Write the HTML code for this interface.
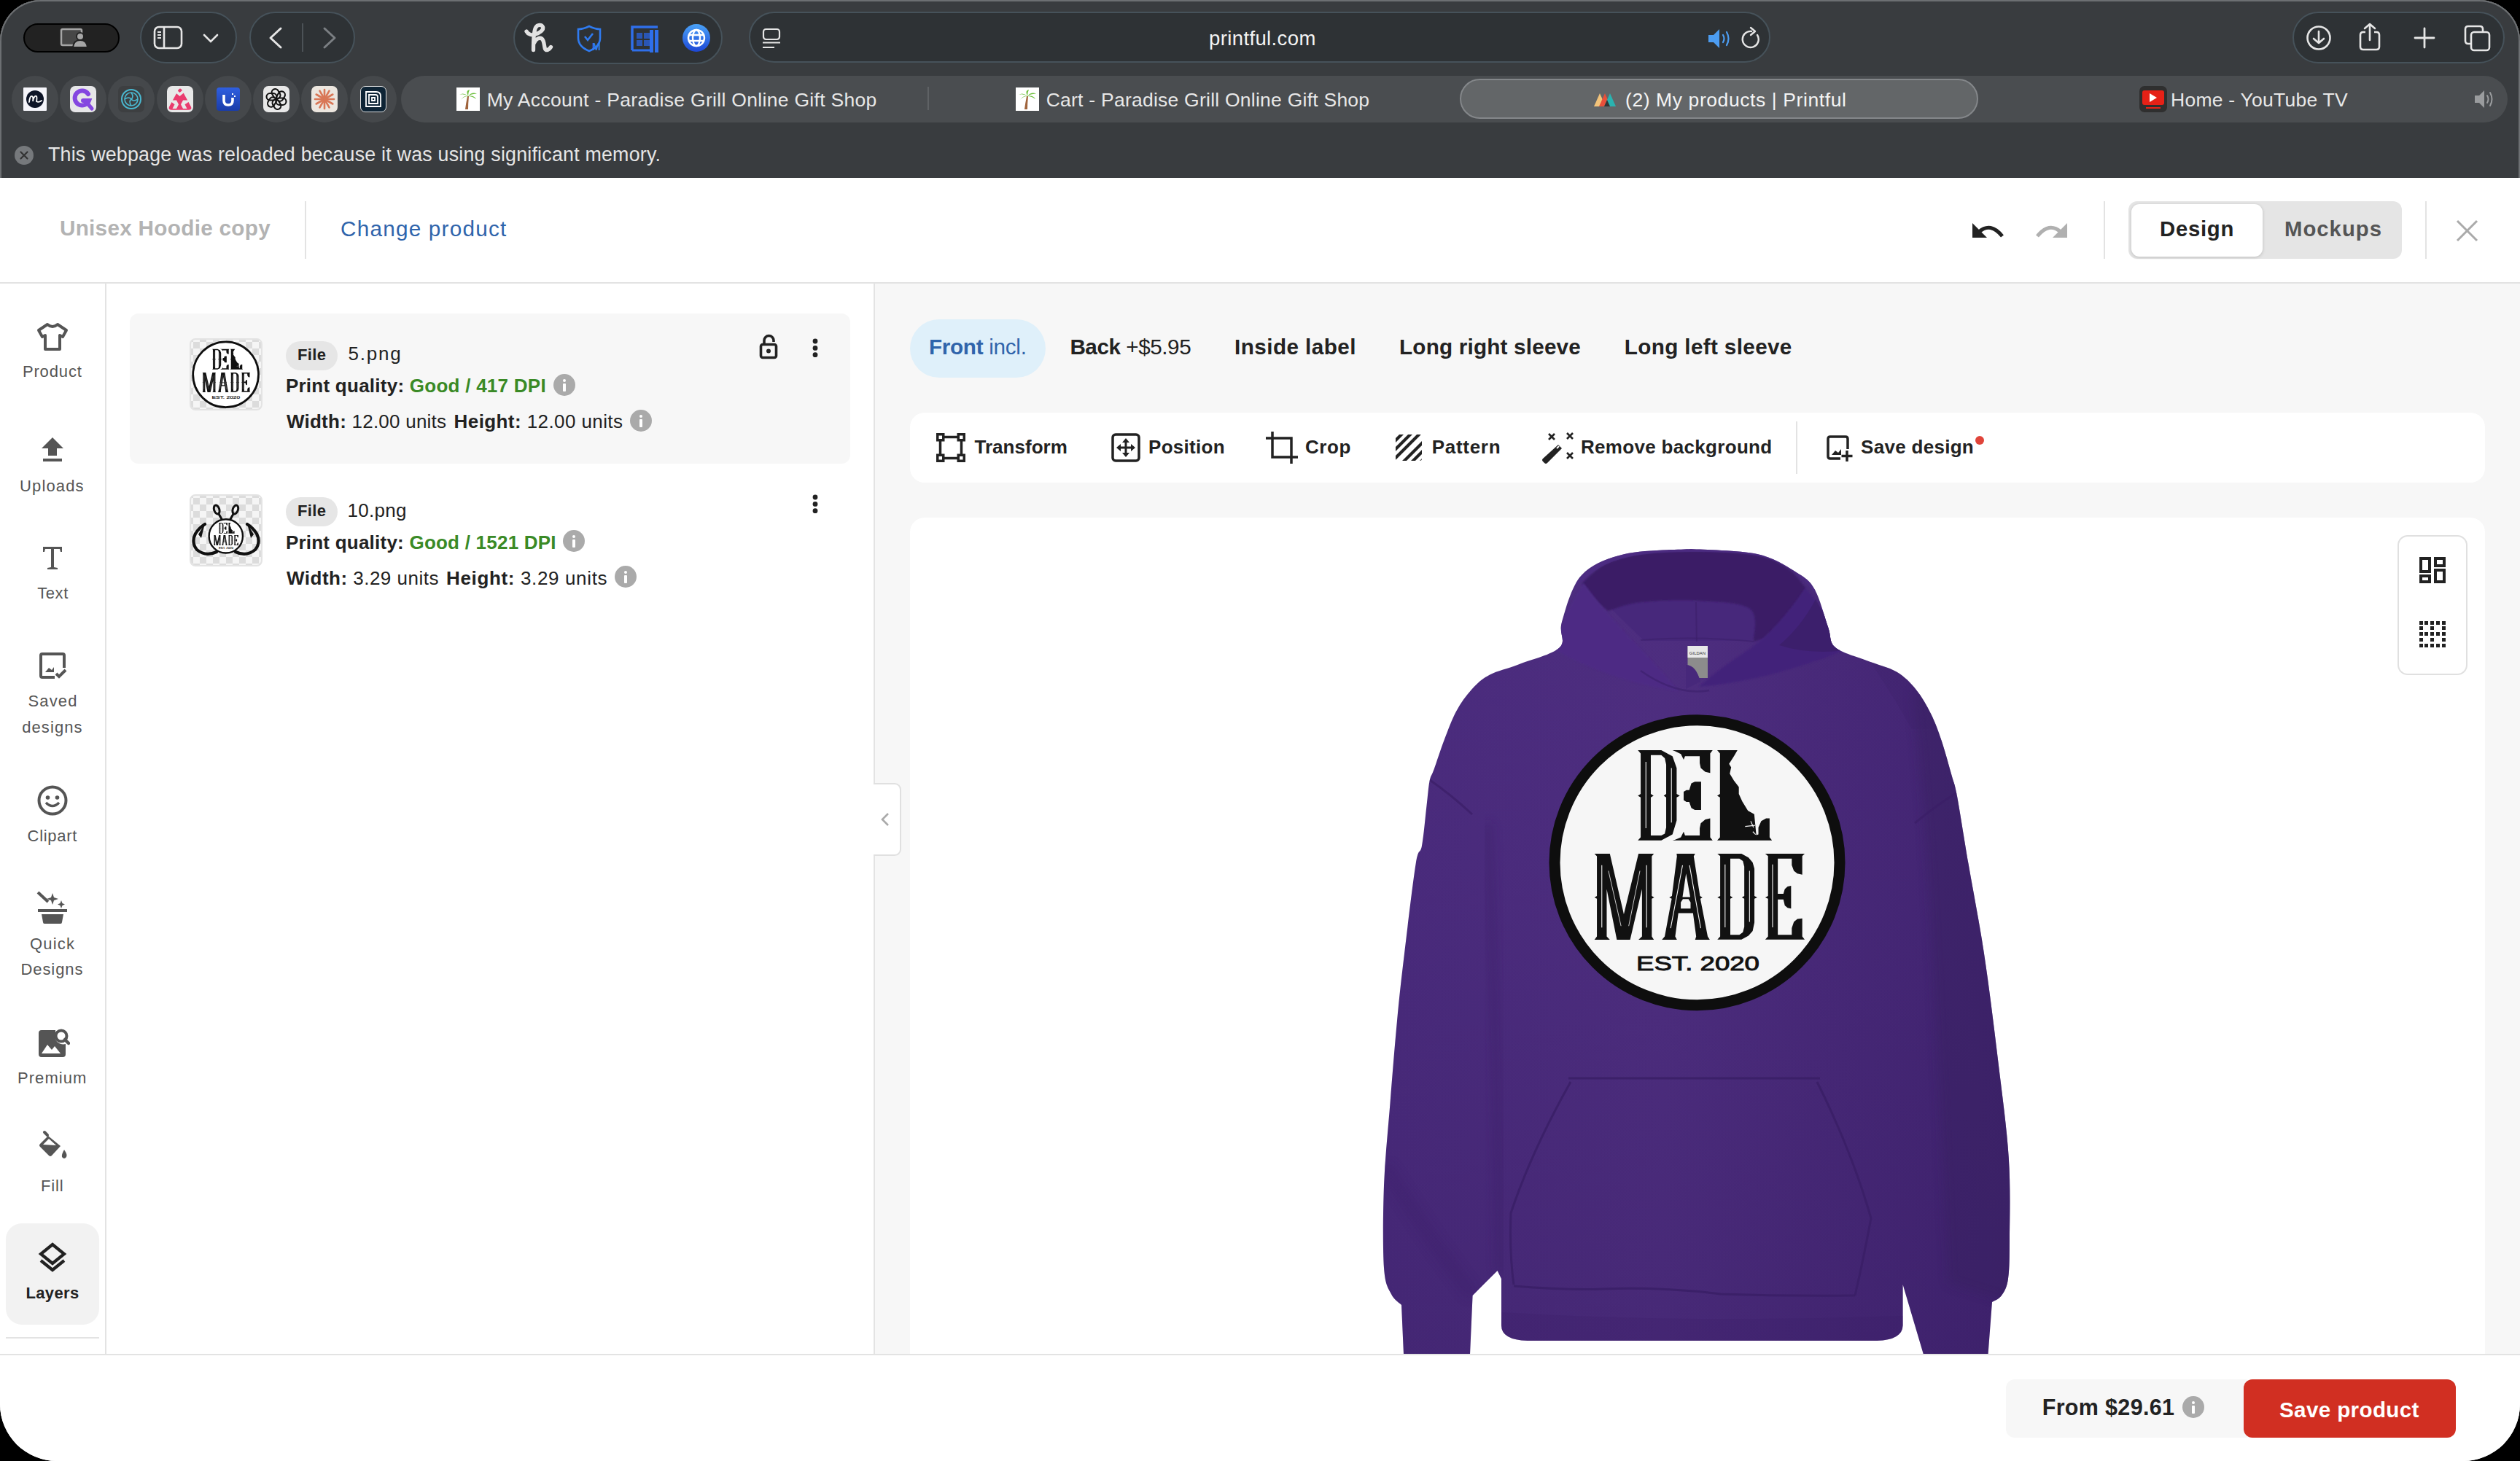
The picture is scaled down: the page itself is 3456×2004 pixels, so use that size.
<!DOCTYPE html>
<html><head><meta charset="utf-8">
<style>
*{box-sizing:border-box;margin:0;padding:0}
html,body{width:3456px;height:2004px;overflow:hidden;background:#000}
body{font-family:"Liberation Sans",sans-serif;position:relative}
.a{position:absolute}
.win{position:absolute;left:0;top:0;width:3456px;height:2004px;border-radius:56px 56px 78px 78px;overflow:hidden;background:#fff}
.chrome{position:absolute;left:0;top:0;width:3456px;height:244px;background:#393c3f}
.edge{position:absolute;left:0;top:0;width:3456px;height:244px;border-radius:56px 56px 0 0;border:2px solid #6c6f72;border-bottom:none;pointer-events:none}
.grp{position:absolute;top:16px;height:71px;border-radius:36px;background:#2e3235;border:2px solid #46525a}
.fav{position:absolute;top:104px;width:64px;height:64px;border-radius:50%;background:#45484b}
.fico{position:absolute;left:14px;top:14px;width:36px;height:36px;border-radius:7px;overflow:hidden}
.ttl{position:absolute;top:104px;height:64px;line-height:64px;font-size:25.5px;color:#e6e6e6;white-space:nowrap}
.t{position:absolute;white-space:nowrap;line-height:1}
.dk{color:#222}
.b{font-weight:bold}
.side{position:absolute;left:0;width:144px;text-align:center;font-size:24px;color:#555;line-height:36px}
.info{position:absolute;width:30px;height:30px;border-radius:50%;background:#aaa}
.info:before{content:"";position:absolute;left:13px;top:7px;width:4px;height:4px;border-radius:2px;background:#fff}
.info:after{content:"";position:absolute;left:13px;top:13px;width:4px;height:11px;background:#fff;border-radius:1px}
</style></head><body>
<div class="win">
<div class="chrome">
  <!-- screen share pill -->
  <div class="a" style="left:32px;top:32px;width:132px;height:40px;border-radius:20px;background:#222;border:2px solid #000"></div>
  <svg class="a" style="left:82px;top:38px" width="38" height="28" viewBox="0 0 38 28"><rect x="2" y="2" width="28" height="22" rx="2" fill="#474747" stroke="#a6a6a6" stroke-width="2.5"/><circle cx="28" cy="12" r="5" fill="#a6a6a6" stroke="#222" stroke-width="2"/><path d="M18 27 Q19 17 28 17 Q37 17 38 27 Z" fill="#a6a6a6" stroke="#222" stroke-width="2"/></svg>
  <!-- sidebar group -->
  <div class="grp" style="left:192px;width:133px"></div>
  <svg class="a" style="left:210px;top:35px" width="42" height="34" viewBox="0 0 42 34"><rect x="2" y="2" width="37" height="29" rx="6" fill="none" stroke="#e6e6e6" stroke-width="2.6"/><line x1="15" y1="2" x2="15" y2="31" stroke="#e6e6e6" stroke-width="2.6"/><path d="M6 9h5M6 13h5M6 17h5" stroke="#e6e6e6" stroke-width="1.8"/></svg>
  <svg class="a" style="left:278px;top:45px" width="22" height="16" viewBox="0 0 22 16"><path d="M2 3 L11 12 L20 3" fill="none" stroke="#e6e6e6" stroke-width="2.6" stroke-linecap="round"/></svg>
  <!-- back/forward group -->
  <div class="grp" style="left:342px;width:145px"></div>
  <svg class="a" style="left:366px;top:36px" width="24" height="32" viewBox="0 0 24 32"><path d="M19 3 L5 16 L19 29" fill="none" stroke="#e6e6e6" stroke-width="3" stroke-linecap="round" stroke-linejoin="round"/></svg>
  <div class="a" style="left:414px;top:32px;width:2px;height:39px;background:#4c5257"></div>
  <svg class="a" style="left:440px;top:36px" width="24" height="32" viewBox="0 0 24 32"><path d="M5 3 L19 16 L5 29" fill="none" stroke="#7b7f83" stroke-width="3" stroke-linecap="round" stroke-linejoin="round"/></svg>
  <!-- extensions group -->
  <div class="grp" style="left:704px;width:287px;height:72px"></div>
  <svg class="a" style="left:715px;top:28px" width="46" height="46" viewBox="0 0 46 46"><path d="M7,15 C9,19 14,20.5 18,19.5 C25,17.5 31,13 29.5,9 C28,5.5 22,5 19.5,10 C17,15 16.5,27 16.5,40.5 M17.5,31 C20,25 25,23 28,25 C31.5,27.5 31,35 32.5,39 C34,42 38,40.5 40.5,36.5" fill="none" stroke="#e2e2e2" stroke-width="5.3" stroke-linecap="round" stroke-linejoin="round"/></svg>
  <svg class="a" style="left:790px;top:34px" width="38" height="38" viewBox="0 0 38 38"><path d="M18 2 Q26 6 33 6 L33 18 Q33 30 18 36 Q3 30 3 18 L3 6 Q10 6 18 2Z" fill="none" stroke="#2f7bf0" stroke-width="2.6"/><path d="M12 16 L16 21 L23 12" fill="none" stroke="#2f7bf0" stroke-width="2.6"/><text x="22" y="35" font-size="14" font-weight="bold" fill="#2f7bf0" font-family="Liberation Sans">M</text></svg>
  <svg class="a" style="left:864px;top:34px" width="40" height="38" viewBox="0 0 40 38"><path d="M3 35 L3 3 L38 3" fill="none" stroke="#2f6fea" stroke-width="3.5"/><rect x="9" y="11" width="8" height="8" fill="#2a56b5"/><rect x="19" y="11" width="8" height="8" fill="#2a56b5"/><rect x="9" y="21" width="8" height="8" fill="#2a56b5"/><rect x="19" y="21" width="8" height="8" fill="#2a56b5"/><rect x="27" y="7" width="5" height="31" fill="#2f6fea"/><rect x="34" y="7" width="5" height="31" fill="#2f6fea"/><path d="M3 35 L27 35" stroke="#2f6fea" stroke-width="3"/></svg>
  <svg class="a" style="left:935px;top:32px" width="40" height="40" viewBox="0 0 40 40"><defs><linearGradient id="gg" x1="0" y1="0" x2="0" y2="1"><stop offset="0" stop-color="#4aa3f8"/><stop offset="1" stop-color="#1d47d6"/></linearGradient></defs><circle cx="20" cy="20" r="19" fill="url(#gg)"/><circle cx="20" cy="20" r="11" fill="none" stroke="#fff" stroke-width="2.4"/><ellipse cx="20" cy="20" rx="5" ry="11" fill="none" stroke="#fff" stroke-width="2.4"/><path d="M9 16h22M9 24h22" stroke="#fff" stroke-width="2.4"/></svg>
  <!-- URL bar -->
  <div class="grp" style="left:1027px;width:1401px;height:70px"></div>
  <svg class="a" style="left:1044px;top:38px" width="28" height="30" viewBox="0 0 28 30"><rect x="3" y="2" width="22" height="14" rx="3.5" fill="none" stroke="#e6e6e6" stroke-width="2.2"/><path d="M2 20.5h24M2 27h16" stroke="#e6e6e6" stroke-width="2.2"/></svg>
<div class="t" id="url" style="left:1658.0px;top:38.7px;font-size:27.50px;color:#f4f4f4;letter-spacing:0.382px;">printful.com</div>
  <svg class="a" style="left:2342px;top:38px" width="34" height="30" viewBox="0 0 34 30"><path d="M1 10 L8 10 L16 2 L16 28 L8 20 L1 20Z" fill="#4c9df2"/><path d="M21 10 Q24 15 21 20M26 6 Q31 15 26 24" fill="none" stroke="#4c9df2" stroke-width="2.2" stroke-linecap="round"/></svg>
  <svg class="a" style="left:2388px;top:36px" width="30" height="32" viewBox="0 0 30 32"><path d="M22 12 A11 11 0 1 1 14 7" fill="none" stroke="#e6e6e6" stroke-width="2.4" stroke-linecap="round"/><path d="M13 2 L19 7 L13 12" fill="none" stroke="#e6e6e6" stroke-width="2.4" stroke-linecap="round" stroke-linejoin="round"/></svg>
  <!-- right toolbar -->
  <div class="grp" style="left:3144px;width:291px"></div>
  <svg class="a" style="left:3162px;top:34px" width="36" height="36" viewBox="0 0 36 36"><circle cx="18" cy="18" r="15.5" fill="none" stroke="#e6e6e6" stroke-width="2.6"/><path d="M18 9 L18 25 M11 19 L18 25 L25 19" fill="none" stroke="#e6e6e6" stroke-width="2.6" stroke-linecap="round" stroke-linejoin="round"/></svg>
  <svg class="a" style="left:3234px;top:30px" width="32" height="40" viewBox="0 0 32 40"><path d="M10 14 L7 14 Q3 14 3 18 L3 34 Q3 38 7 38 L25 38 Q29 38 29 34 L29 18 Q29 14 25 14 L22 14" fill="none" stroke="#e6e6e6" stroke-width="2.6"/><path d="M16 3 L16 25 M9 9 L16 3 L23 9" fill="none" stroke="#e6e6e6" stroke-width="2.6" stroke-linecap="round" stroke-linejoin="round"/></svg>
  <svg class="a" style="left:3310px;top:37px" width="30" height="30" viewBox="0 0 30 30"><path d="M15 2V28M2 15H28" stroke="#e6e6e6" stroke-width="2.8" stroke-linecap="round"/></svg>
  <svg class="a" style="left:3379px;top:34px" width="38" height="38" viewBox="0 0 38 38"><path d="M11 26 L6 26 Q2 26 2 22 L2 6 Q2 2 6 2 L22 2 Q26 2 26 6 L26 10" fill="none" stroke="#e6e6e6" stroke-width="2.6"/><rect x="10" y="10" width="25" height="25" rx="4" fill="none" stroke="#e6e6e6" stroke-width="2.6"/></svg>

  <!-- favorites -->
  <div class="fav" style="left:15.6px"><div class="fico" style="left:16px;top:16px;width:32px;height:32px;border-radius:1px;background:#f5f5fa"><svg width="32" height="32" viewBox="0 0 32 32"><circle cx="16" cy="16" r="12" fill="#0d1426"/><path d="M8 20 Q9 11 12 12 Q14 13 13 19 Q15 10 18 12 Q19 14 18 19 Q21 21 25 18" fill="none" stroke="#fff" stroke-width="1.8" stroke-linecap="round"/></svg></div></div>
<div class="fav" style="left:81.9px"><div class="fico" style="background:#e6e6e8"><svg width="36" height="36" viewBox="0 0 36 36"><path d="M25 11 A10 10 0 1 0 26 20 L18 20" fill="none" stroke="#8447e0" stroke-width="6" stroke-linecap="round"/><path d="M24 24 L30 31" stroke="#8447e0" stroke-width="5" stroke-linecap="round"/></svg></div></div>
<div class="fav" style="left:148.2px"><div class="fico" style="background:#3d3f41"><svg width="36" height="36" viewBox="0 0 36 36"><circle cx="18" cy="18" r="13" fill="none" stroke="#4ab8d0" stroke-width="2"/><circle cx="18" cy="18" r="9" fill="none" stroke="#4ab8d0" stroke-width="1.6"/><path d="M18 9 Q22 15 18 18 Q14 21 18 27 M9 18 Q15 14 18 18 Q21 22 27 18" fill="none" stroke="#4ab8d0" stroke-width="1.6"/></svg></div></div>
<div class="fav" style="left:214.5px"><div class="fico" style="background:#e8e8e8"><svg width="36" height="36" viewBox="0 0 36 36"><path d="M18 3.5 Q19.5 3.5 20.5 5.5 L33 28.5 Q34.5 32.5 30 32.8 L6 32.8 Q1.5 32.5 3 28.5 L15.5 5.5 Q16.5 3.5 18 3.5Z" fill="#ea3b6e"/><path d="M11 6 L17.5 11.5 L24 6" fill="none" stroke="#e8e8e8" stroke-width="3.8"/><path d="M3 19.4 L13 19.4 L16 25.3 L13 31 L7.5 31 L10.5 25.3 Z M33 19.4 L22 19.4 L19 25.3 L22 31 L27.5 31 L24.5 25.3 Z" fill="#e8e8e8"/></svg></div></div>
<div class="fav" style="left:280.8px"><div class="fico" style="left:16px;top:16px;width:32px;height:32px;border-radius:4px;background:linear-gradient(#2f5fe0,#1a3ca8)"><svg width="32" height="32" viewBox="0 0 32 32"><path d="M10 10 L10 18 Q10 24 16 24 Q22 24 22 18 L22 14" fill="none" stroke="#fff" stroke-width="3.6"/><rect x="21" y="8" width="2" height="2" fill="#fff"/><rect x="24" y="11" width="2" height="2" fill="#fff"/></svg></div></div>
<div class="fav" style="left:347.1px"><div class="fico" style="background:#e8e8e8"><svg width="36" height="36" viewBox="0 0 36 36"><g fill="none" stroke="#111" stroke-width="2.1"><rect x="16.5" y="4.5" width="9.5" height="14" rx="4.75" transform="rotate(30 18 18)"/><rect x="16.5" y="4.5" width="9.5" height="14" rx="4.75" transform="rotate(90 18 18)"/><rect x="16.5" y="4.5" width="9.5" height="14" rx="4.75" transform="rotate(150 18 18)"/><rect x="16.5" y="4.5" width="9.5" height="14" rx="4.75" transform="rotate(210 18 18)"/><rect x="16.5" y="4.5" width="9.5" height="14" rx="4.75" transform="rotate(270 18 18)"/><rect x="16.5" y="4.5" width="9.5" height="14" rx="4.75" transform="rotate(330 18 18)"/></g></svg></div></div>
<div class="fav" style="left:413.4px"><div class="fico" style="background:#ece6df"><svg width="36" height="36" viewBox="0 0 36 36"><g stroke="#d97757" stroke-width="2.6" stroke-linecap="round"><line x1="18" y1="18" x2="31.0" y2="18.0"/><line x1="18" y1="18" x2="29.3" y2="24.5"/><line x1="18" y1="18" x2="24.5" y2="29.3"/><line x1="18" y1="18" x2="18.0" y2="31.0"/><line x1="18" y1="18" x2="11.5" y2="29.3"/><line x1="18" y1="18" x2="6.7" y2="24.5"/><line x1="18" y1="18" x2="5.0" y2="18.0"/><line x1="18" y1="18" x2="6.7" y2="11.5"/><line x1="18" y1="18" x2="11.5" y2="6.7"/><line x1="18" y1="18" x2="18.0" y2="5.0"/><line x1="18" y1="18" x2="24.5" y2="6.7"/><line x1="18" y1="18" x2="29.3" y2="11.5"/></g></svg></div></div>
<div class="fav" style="left:479.7px"><div class="fico" style="background:#0e2435;border:1.5px solid #ddd"><svg width="34" height="34" viewBox="0 0 34 34"><path d="M7 7 L21 7 Q27 7 27 13 L27 27 L7 27 Z M11 11 L20 11 Q23 11 23 14 L23 23 L11 23 Z M15 15 L19 15 L19 19 L15 19Z" fill="none" stroke="#fff" stroke-width="1.8"/></svg></div></div>
  <!-- tab bar -->
  <div class="a" style="left:550px;top:104px;width:2889px;height:64px;border-radius:32px;background:#4a4d50"></div>
  <div class="a" style="left:2002px;top:108px;width:711px;height:55px;border-radius:28px;background:#636668;border:2px solid #84878a"></div>
  <div class="a" style="left:1272px;top:119px;width:2px;height:32px;background:#5f6265"></div>
  <svg class="a" style="left:626px;top:120px" width="32" height="32" viewBox="0 0 32 32"><rect width="32" height="32" fill="#fff"/><path d="M15 12 Q13 22 12 30 L16 30 Q16 22 17 12Z" fill="#a0643c"/><path d="M16 12 Q10 6 4 10 Q10 8 16 12 Q12 4 18 3 Q16 7 16 12 Q22 5 28 9 Q22 8 16 12 Q24 10 27 16 Q22 12 16 12 Q10 12 6 17 Q10 11 16 12Z" fill="#6cbf3c"/></svg>
<div class="t" id="tab1" style="left:667.7px;top:123.6px;font-size:26.50px;color:#e8e8e8;letter-spacing:0.309px;">My Account - Paradise Grill Online Gift Shop</div>
<svg class="a" style="left:1393px;top:120px" width="32" height="32" viewBox="0 0 32 32"><rect width="32" height="32" fill="#fff"/><path d="M15 12 Q13 22 12 30 L16 30 Q16 22 17 12Z" fill="#a0643c"/><path d="M16 12 Q10 6 4 10 Q10 8 16 12 Q12 4 18 3 Q16 7 16 12 Q22 5 28 9 Q22 8 16 12 Q24 10 27 16 Q22 12 16 12 Q10 12 6 17 Q10 11 16 12Z" fill="#6cbf3c"/></svg>
<div class="t" id="tab2" style="left:1434.7px;top:123.6px;font-size:26.50px;color:#e8e8e8;letter-spacing:0.241px;">Cart - Paradise Grill Online Gift Shop</div>
<svg class="a" style="left:2186px;top:122px" width="34" height="26" viewBox="0 0 34 26"><path d="M0 24 L8 6 L16 24Z" fill="#f2c37a"/><path d="M7 24 L15 6 L23 24Z" fill="#e8503a"/><path d="M14 24 L22 6 L30 24Z" fill="#2ab3b0"/><path d="M14 24 L18 15 L22 24Z" fill="#333"/></svg>
<div class="t" id="tab3" style="left:2229.0px;top:123.6px;font-size:26.50px;color:#f4f4f4;letter-spacing:0.588px;">(2) My products | Printful</div>
<div class="a" style="left:2934px;top:118px;width:38px;height:36px;border-radius:7px;background:#2f2f2f"><div class="a" style="left:4px;top:6px;width:30px;height:20px;border-radius:3px;background:#e62117"></div><div class="a" style="left:14px;top:10px;width:0;height:0;border-left:10px solid #fff;border-top:6px solid transparent;border-bottom:6px solid transparent"></div><div class="a" style="left:9px;top:29px;width:20px;height:2px;background:#e62117"></div></div>
<div class="t" id="tab4" style="left:2977.0px;top:123.6px;font-size:26.50px;color:#e8e8e8;letter-spacing:0.250px;">Home - YouTube TV</div>
<svg class="a" style="left:3393px;top:122px" width="30" height="28" viewBox="0 0 30 28"><path d="M1 9 L7 9 L14 2 L14 26 L7 19 L1 19Z" fill="#9a9c9e"/><path d="M18 9 Q21 14 18 19M22 5 Q27 14 22 23" fill="none" stroke="#9a9c9e" stroke-width="2" stroke-linecap="round"/></svg>

  <!-- notification -->
  <div class="a" style="left:20px;top:200px;width:26px;height:26px;border-radius:50%;background:#76797c"></div>
  <svg class="a" style="left:20px;top:200px" width="26" height="26" viewBox="0 0 26 26"><path d="M8.5 8.5L17.5 17.5M17.5 8.5L8.5 17.5" stroke="#333" stroke-width="2.2" stroke-linecap="round"/></svg>
<div class="t" id="notif" style="left:66.0px;top:199.3px;font-size:26.80px;color:#e6e6e6;letter-spacing:0.212px;">This webpage was reloaded because it was using significant memory.</div>
</div>
<div class="edge"></div>
<!-- header -->
<div class="a" style="left:0;top:244px;width:3456px;height:144px;background:#fff"></div>
<div class="a" style="left:0;top:387px;width:3456px;height:2px;background:#e3e3e3"></div>
<div class="t b" id="h1" style="left:81.9px;top:297.9px;font-size:29.70px;color:#b3b3b3;letter-spacing:0.300px;">Unisex Hoodie copy</div>
<div class="a" style="left:418px;top:276px;width:2px;height:79px;background:#e3e3e3"></div>
<div class="t" id="h2" style="left:467.0px;top:298.9px;font-size:29.70px;color:#2f64ab;letter-spacing:1.231px;">Change product</div>
<!-- undo/redo -->
<svg class="a" style="left:2702px;top:300px" width="48" height="30" viewBox="0 0 48 30"><path d="M3 6 L3 26 L23 26 Z" fill="#222"/><path d="M12 18 Q28 4 44 24" fill="none" stroke="#222" stroke-width="5"/></svg>
<svg class="a" style="left:2790px;top:300px" width="48" height="30" viewBox="0 0 48 30"><path d="M45 6 L45 26 L25 26 Z" fill="#b0b0b0"/><path d="M36 18 Q20 4 4 24" fill="none" stroke="#b0b0b0" stroke-width="5"/></svg>
<div class="a" style="left:2885px;top:276px;width:2px;height:79px;background:#e3e3e3"></div>
<div class="a" style="left:2919px;top:276px;width:375px;height:79px;border-radius:12px;background:#e5e5e5"></div>
<div class="a" style="left:2923px;top:280px;width:180px;height:72px;border-radius:11px;background:#fff;box-shadow:0 1px 4px rgba(0,0,0,.18)"></div>
<div class="t b" id="h3" style="left:2962.0px;top:299.0px;font-size:29.30px;color:#222;letter-spacing:0.720px;">Design</div>
<div class="t b" id="h4" style="left:3133.0px;top:299.2px;font-size:29.30px;color:#555;letter-spacing:1.000px;">Mockups</div>
<div class="a" style="left:3326px;top:276px;width:2px;height:79px;background:#e3e3e3"></div>
<svg class="a" style="left:3368px;top:301px" width="31" height="31" viewBox="0 0 31 31"><path d="M2 2L29 29M29 2L2 29" stroke="#aaa" stroke-width="3"/></svg>

<!-- left sidebar -->
<div class="a" style="left:144px;top:389px;width:2px;height:1469px;background:#e3e3e3"></div>
<svg class="a" style="left:50px;top:442px" width="44" height="40" viewBox="0 0 44 40"><path d="M15 3 Q22 9 29 3 L41 11 L36 20 L32 18 L32 37 L12 37 L12 18 L8 20 L3 11 Z" fill="none" stroke="#555" stroke-width="4" stroke-linejoin="round"/></svg>
<div class="t" id="s1" style="left:30.9px;top:499.1px;font-size:22.00px;color:#555;letter-spacing:0.867px;">Product</div>
<svg class="a" style="left:54px;top:598px" width="36" height="38" viewBox="0 0 36 38"><path d="M18 2 L33 17 L24 17 L24 27 L12 27 L12 17 L3 17 Z" fill="#555"/><rect x="5" y="31" width="26" height="4" fill="#555"/></svg>
<div class="t" id="s2" style="left:27.0px;top:655.7px;font-size:22.00px;color:#555;letter-spacing:1.150px;">Uploads</div>
<svg class="a" style="left:56px;top:747px" width="32" height="36" viewBox="0 0 32 36"><path d="M3 3 L29 3 L29 10 L27 10 L26 6 L18 6 L18 31 L23 32 L23 34 L9 34 L9 32 L14 31 L14 6 L6 6 L5 10 L3 10 Z" fill="#555"/></svg>
<div class="t" id="s3" style="left:51.2px;top:803.4px;font-size:22.00px;color:#555;letter-spacing:0.600px;">Text</div>
<svg class="a" style="left:53px;top:894px" width="40" height="40" viewBox="0 0 40 40"><path d="M22 35 L5 35 Q3 35 3 33 L3 5 Q3 3 5 3 L33 3 Q35 3 35 5 L35 22" fill="none" stroke="#555" stroke-width="4"/><path d="M9 28 L14 22 L18 25 L21 21 L21 28 Z" fill="#555"/><path d="M24 30 L28 34 L37 25" fill="none" stroke="#555" stroke-width="4"/></svg>
<div class="t" id="s4" style="left:38.5px;top:951.0px;font-size:22.00px;color:#555;letter-spacing:1.125px;">Saved</div>
<div class="t" id="s5" style="left:30.2px;top:986.6px;font-size:22.00px;color:#555;letter-spacing:1.100px;">designs</div>
<svg class="a" style="left:50px;top:1076px" width="44" height="44" viewBox="0 0 44 44"><circle cx="22" cy="22" r="18.5" fill="none" stroke="#555" stroke-width="4"/><circle cx="15.5" cy="18" r="2.8" fill="#555"/><circle cx="28.5" cy="18" r="2.8" fill="#555"/><path d="M13 25 Q22 34 31 25" fill="none" stroke="#555" stroke-width="3.5"/></svg>
<div class="t" id="s6" style="left:37.6px;top:1135.9px;font-size:22.00px;color:#555;letter-spacing:0.700px;">Clipart</div>
<svg class="a" style="left:48px;top:1221px" width="48" height="48" viewBox="0 0 48 48"><path d="M4 3 L18 16" stroke="#555" stroke-width="4"/><path d="M24 4 L26 10 L32 12 L26 14 L24 20 L22 14 L16 12 L22 10Z" fill="#555"/><path d="M36 14 L37.5 18 L41 19.5 L37.5 21 L36 25 L34.5 21 L31 19.5 L34.5 18Z" fill="#555"/><rect x="4" y="26" width="40" height="4" fill="#555"/><path d="M9 33 L39 33 L37 44 Q37 46 35 46 L13 46 Q11 46 11 44Z" fill="#555"/></svg>
<div class="t" id="s7" style="left:41.0px;top:1283.8px;font-size:22.00px;color:#555;letter-spacing:1.175px;">Quick</div>
<div class="t" id="s8" style="left:28.4px;top:1319.1px;font-size:22.00px;color:#555;letter-spacing:0.933px;">Designs</div>
<svg class="a" style="left:50px;top:1408px" width="46" height="46" viewBox="0 0 46 46"><path d="M26 5 L7 5 Q3 5 3 9 L3 38 Q3 42 7 42 L36 42 Q40 42 40 38 L40 24 Q31 26 26 18 Z" fill="#555"/><path d="M7 37 L15 25 L21 32 L25 27 L33 37Z" fill="#fff"/><circle cx="34" cy="13" r="7.5" fill="none" stroke="#555" stroke-width="4"/><path d="M39 18 L44 23" stroke="#555" stroke-width="4.5" stroke-linecap="round"/></svg>
<div class="t" id="s9" style="left:24.0px;top:1467.7px;font-size:22.00px;color:#555;letter-spacing:1.050px;">Premium</div>
<svg class="a" style="left:51px;top:1550px" width="44" height="42" viewBox="0 0 44 42"><path d="M10 3 L14 7" stroke="#555" stroke-width="4" stroke-linecap="round"/><path d="M15 8 L32 22 L20 35 Q18 37 16 35 L4 23 Q2 21 4 19 Z" fill="#555"/><path d="M8 20 L16 12 L26 21 Z" fill="#fff"/><path d="M37 27 Q42 34 40 37 Q37 41 34 37 Q33 34 37 27Z" fill="#555"/></svg>
<div class="t" id="s10" style="left:56.0px;top:1615.6px;font-size:22.00px;color:#555;letter-spacing:0.867px;">Fill</div>
<div class="a" style="left:8px;top:1678px;width:128px;height:139px;border-radius:22px;background:#f2f2f2"></div>
<svg class="a" style="left:52px;top:1704px" width="40" height="42" viewBox="0 0 40 42"><path d="M20 3 L36 16 L20 29 L4 16 Z" fill="none" stroke="#222" stroke-width="4.2" stroke-linejoin="miter"/><path d="M4 25 L20 38 L36 25" fill="none" stroke="#222" stroke-width="4.2"/></svg>
<div class="t b" id="s11" style="left:35.5px;top:1763.0px;font-size:22.00px;color:#222;letter-spacing:0.340px;">Layers</div>
<div class="a" style="left:8px;top:1834px;width:128px;height:2px;background:#e3e3e3"></div>

<!-- layers panel -->
<div class="a" style="left:1198px;top:389px;width:2px;height:1469px;background:#e3e3e3"></div>
<div class="a" style="left:178px;top:430px;width:988px;height:206px;border-radius:12px;background:#f7f7f7"></div>
<div class="a" style="left:260px;top:464px;width:100px;height:99px;border-radius:8px;border:2px solid #e3e3e3;background:repeating-conic-gradient(#dcdcdc 0 25%,#f5f5f5 0 50%) 12px 3px/18px 18px"></div>
<svg class="a" style="left:260px;top:464px" width="100" height="99" viewBox="260 464 100 99"><g transform="translate(309.6,513.8) scale(0.228) translate(-2327.5,-1183.3)"><circle cx="2327.5" cy="1183.3" r="197" fill="#fff" stroke="#0e0e0e" stroke-width="12"/><path d="M2186.71,1171.02 L2207.80,1171.02 L2226.97,1253.93 L2247.09,1171.02 L2268.18,1171.02 L2265.31,1174.38 L2265.31,1229.01 L2268.66,1231.12 L2265.31,1232.85 L2265.31,1284.60 L2268.18,1288.92 L2247.09,1288.92 L2251.89,1284.60 L2251.89,1219.43 L2235.59,1288.92 L2217.38,1288.92 L2203.48,1219.43 L2203.48,1284.60 L2207.80,1288.92 L2186.71,1288.92 L2190.06,1284.60 L2190.06,1232.85 L2186.71,1231.12 L2190.06,1229.01 L2190.06,1174.38 Z" fill="#111"/><path d="M2196.77,1186.84 L2196.77,1272.14" stroke="#fff" stroke-width="1.10"/><path d="M2258.12,1186.84 L2258.12,1272.14" stroke="#fff" stroke-width="1.10"/><path d="M2205.88,1194.51 L2223.13,1270.23 M2249.01,1194.51 L2233.68,1270.23" stroke="#fff" stroke-width="0.8"/><path d="M2299.33,1171.02 L2324.73,1171.02 L2322.82,1174.38 L2331.44,1229.01 L2334.80,1231.12 L2331.92,1232.85 L2341.99,1284.60 L2344.86,1288.92 L2324.73,1288.92 L2326.17,1284.60 L2321.86,1252.49 L2301.73,1252.49 L2297.42,1284.60 L2299.81,1288.92 L2279.20,1288.92 L2283.04,1284.60 L2292.62,1232.85 L2289.27,1231.12 L2292.91,1229.01 L2299.81,1174.38 Z M2307.48,1230.45 L2312.27,1198.34 L2318.02,1230.45 Z M2305.08,1246.26 L2305.08,1237.64 L2307.96,1233.33 L2315.63,1233.33 L2318.50,1237.64 L2318.50,1246.26 Z" fill="#111" fill-rule="evenodd"/><path d="M2307.48,1186.84 L2291.19,1273.10 M2317.07,1186.84 L2332.40,1273.10" stroke="#fff" stroke-width="1.1"/><path d="M2355.27,1171.02 L2388.32,1171.02 L2397.90,1176.29 L2403.65,1182.99 L2406.05,1191.62 L2406.05,1228.98 L2409.88,1231.09 L2406.05,1232.81 L2406.05,1265.38 L2403.65,1276.88 L2397.90,1283.59 L2388.32,1288.86 L2355.27,1288.86 L2359.10,1284.54 L2359.10,1232.81 L2355.27,1231.09 L2359.10,1228.98 L2359.10,1174.37 Z M2372.99,1177.72 L2385.45,1177.72 L2390.24,1181.08 L2392.15,1188.74 L2392.15,1228.98 L2388.80,1231.09 L2392.15,1232.81 L2392.15,1271.13 L2390.24,1278.80 L2385.45,1282.15 L2372.99,1282.15 L2372.99,1232.81 L2376.35,1231.09 L2372.99,1228.98 Z" fill="#111" fill-rule="evenodd"/><path d="M2365.81,1185.87 L2365.81,1272.09" stroke="#fff" stroke-width="1.10"/><path d="M2399.34,1194.49 L2399.34,1264.43" stroke="#fff" stroke-width="1.10"/><path d="M2420.89,1171.02 L2475.02,1171.02 L2471.67,1174.37 L2471.67,1199.76 L2464.96,1198.32 L2460.17,1194.49 L2457.30,1186.83 L2457.30,1177.72 L2438.14,1177.72 L2438.14,1226.10 L2445.80,1226.10 L2447.72,1219.40 L2451.55,1216.05 L2456.34,1215.09 L2456.34,1246.22 L2451.55,1245.27 L2447.72,1241.91 L2445.80,1233.77 L2438.14,1233.77 L2438.14,1282.15 L2457.30,1282.15 L2457.30,1273.05 L2460.17,1264.43 L2464.96,1260.59 L2471.67,1259.64 L2471.67,1284.54 L2475.02,1288.86 L2420.89,1288.86 L2424.73,1284.54 L2424.73,1232.81 L2420.89,1231.09 L2424.73,1228.98 L2424.73,1174.37 Z" fill="#111"/><path d="M2430.95,1185.87 L2430.95,1272.09" stroke="#fff" stroke-width="1.10"/><path d="M2246.23,1029.10 L2278.33,1029.10 L2293.67,1037.25 L2299.42,1053.54 L2299.42,1089.00 L2303.73,1091.39 L2299.42,1093.79 L2299.42,1125.41 L2293.67,1144.58 L2278.33,1152.73 L2246.23,1152.73 L2250.06,1148.41 L2250.06,1093.79 L2246.23,1091.39 L2250.06,1089.00 L2250.06,1033.42 Z M2263.96,1035.81 L2278.33,1035.81 L2283.12,1040.12 L2285.04,1048.75 L2285.04,1089.00 L2281.69,1091.39 L2285.04,1093.79 L2285.04,1135.00 L2283.12,1143.62 L2278.33,1146.02 L2263.96,1146.02 L2263.96,1093.79 L2267.79,1091.39 L2263.96,1089.00 Z" fill="#111" fill-rule="evenodd"/><path d="M2257.25,1044.92 L2257.25,1135.96" stroke="#fff" stroke-width="1.10"/><path d="M2292.23,1053.54 L2292.23,1128.29" stroke="#fff" stroke-width="1.10"/><path d="M2293.67,1029.10 L2348.77,1029.10 L2345.41,1033.42 L2345.41,1060.25 L2338.71,1058.81 L2332.48,1053.54 L2331.04,1046.83 L2331.04,1037.25 L2310.92,1037.25 L2309.00,1042.04 L2305.17,1034.37 L2297.50,1030.54 Z M2309.00,1086.12 L2312.83,1083.73 L2316.67,1083.73 L2319.54,1074.62 L2324.33,1072.23 L2332.96,1072.23 L2332.96,1111.04 L2324.33,1111.04 L2319.54,1108.16 L2316.67,1100.02 L2312.83,1100.02 L2309.00,1097.62 Z M2293.67,1152.73 L2348.77,1152.73 L2345.41,1148.41 L2345.41,1122.54 L2338.71,1123.98 L2332.48,1129.25 L2331.04,1135.96 L2331.04,1146.02 L2310.92,1146.02 L2309.00,1140.75 L2305.17,1148.41 L2297.50,1151.77 Z" fill="#111"/><path d="M2355.00,1029.10 L2382.79,1029.10 L2378.00,1037.25 L2371.29,1047.79 L2374.16,1052.58 L2372.25,1061.21 L2378.00,1070.79 L2384.71,1079.42 L2384.71,1089.00 L2389.50,1099.54 L2397.16,1112.00 L2405.79,1116.79 L2408.66,1145.54 L2411.54,1144.58 L2411.54,1135.00 L2415.37,1126.37 L2422.08,1122.54 L2426.87,1122.54 L2426.87,1148.41 L2430.23,1152.73 L2355.00,1152.73 L2358.83,1148.41 L2358.83,1093.79 L2355.00,1091.39 L2358.83,1089.00 L2358.83,1033.42 Z" fill="#111"/><path d="M2393.33,1133.56 L2406.75,1132.12 M2401.00,1126.37 L2404.83,1135.00 M2403.87,1140.75 L2407.70,1144.58" stroke="#fff" stroke-width="1.2"/><text x="2328.5" y="1331" font-family="Liberation Sans" font-size="27" fill="#111" stroke="#111" stroke-width="0.9" text-anchor="middle" textLength="169" lengthAdjust="spacingAndGlyphs">EST. 2020</text></g></svg>
<div class="a" style="left:392px;top:468px;width:71px;height:40px;border-radius:20px;background:#e6e6e6"></div>
<div class="t b" id="file1" style="left:408.0px;top:475.7px;font-size:22.00px;color:#222;letter-spacing:0.333px;">File</div>
<div class="t" id="png1" style="left:477.6px;top:472.0px;font-size:26.00px;color:#222;letter-spacing:1.775px;">5.png</div>
<div class="t b" id="pq0" style="left:391.9px;top:515.9px;font-size:26.00px;color:#222;letter-spacing:0.254px;">Print quality: <span style="color:#3a8a26">Good / 417 DPI</span></div>
<div class="info" style="left:759.0px;top:512.5px"></div>
<div class="t" id="wd0" style="left:393.0px;top:564.8px;font-size:26.00px;color:#222;letter-spacing:0.235px;"><b>Width:</b> 12.00 units</div>
<div class="t" id="ht0" style="left:622.6px;top:564.8px;font-size:26.00px;color:#222;letter-spacing:0.411px;"><b>Height:</b> 12.00 units</div>
<div class="info" style="left:863.6px;top:561.5px"></div>
<svg class="a" style="left:1040px;top:458px" width="28" height="35" viewBox="0 0 28 35"><path d="M8 15 L8 9 A6.5 6.5 0 0 1 21 9 L21 11" fill="none" stroke="#222" stroke-width="3.6"/><rect x="3.5" y="14.5" width="21" height="18" rx="2.5" fill="none" stroke="#222" stroke-width="3.6"/><circle cx="14" cy="23.5" r="3" fill="#222"/></svg>
<svg class="a" style="left:1112px;top:464px" width="12" height="30" viewBox="0 0 12 30"><circle cx="6" cy="4" r="3.4" fill="#222"/><circle cx="6" cy="13.4" r="3.4" fill="#222"/><circle cx="6" cy="22.7" r="3.4" fill="#222"/></svg>
<div class="a" style="left:260px;top:678px;width:100px;height:99px;border-radius:8px;border:2px solid #e3e3e3;background:repeating-conic-gradient(#dcdcdc 0 25%,#f5f5f5 0 50%) 12px 3px/18px 18px"></div>
<svg class="a" style="left:260px;top:678px" width="100" height="99" viewBox="260 678 100 99"><g fill="none" stroke="#111" stroke-linecap="round"><ellipse cx="297.2" cy="699" rx="3.6" ry="6.2" stroke-width="3" transform="rotate(-18 297.2 699)"/><ellipse cx="322.8" cy="699" rx="3.6" ry="6.2" stroke-width="3" transform="rotate(18 322.8 699)"/><path d="M300,705 L304,712 M320,705 L316,712" stroke-width="3"/><path d="M297,757 Q282,764 270,754 Q262,744 268,732 Q273,724 281,719" stroke-width="4.2"/><path d="M323,757 Q338,764 350,754 Q358,744 352,732 Q347,724 339,719" stroke-width="4.2"/></g><path d="M281,718 L276,738 L272,733 Z M339,718 L344,738 L348,733 Z" fill="#111"/><g transform="translate(309.8,735.4) scale(0.1187) translate(-2327.5,-1183.3)"><circle cx="2327.5" cy="1183.3" r="195" fill="#fff" stroke="#0e0e0e" stroke-width="20"/><path d="M2186.71,1171.02 L2207.80,1171.02 L2226.97,1253.93 L2247.09,1171.02 L2268.18,1171.02 L2265.31,1174.38 L2265.31,1229.01 L2268.66,1231.12 L2265.31,1232.85 L2265.31,1284.60 L2268.18,1288.92 L2247.09,1288.92 L2251.89,1284.60 L2251.89,1219.43 L2235.59,1288.92 L2217.38,1288.92 L2203.48,1219.43 L2203.48,1284.60 L2207.80,1288.92 L2186.71,1288.92 L2190.06,1284.60 L2190.06,1232.85 L2186.71,1231.12 L2190.06,1229.01 L2190.06,1174.38 Z" fill="#111"/><path d="M2196.77,1186.84 L2196.77,1272.14" stroke="#fff" stroke-width="1.10"/><path d="M2258.12,1186.84 L2258.12,1272.14" stroke="#fff" stroke-width="1.10"/><path d="M2205.88,1194.51 L2223.13,1270.23 M2249.01,1194.51 L2233.68,1270.23" stroke="#fff" stroke-width="0.8"/><path d="M2299.33,1171.02 L2324.73,1171.02 L2322.82,1174.38 L2331.44,1229.01 L2334.80,1231.12 L2331.92,1232.85 L2341.99,1284.60 L2344.86,1288.92 L2324.73,1288.92 L2326.17,1284.60 L2321.86,1252.49 L2301.73,1252.49 L2297.42,1284.60 L2299.81,1288.92 L2279.20,1288.92 L2283.04,1284.60 L2292.62,1232.85 L2289.27,1231.12 L2292.91,1229.01 L2299.81,1174.38 Z M2307.48,1230.45 L2312.27,1198.34 L2318.02,1230.45 Z M2305.08,1246.26 L2305.08,1237.64 L2307.96,1233.33 L2315.63,1233.33 L2318.50,1237.64 L2318.50,1246.26 Z" fill="#111" fill-rule="evenodd"/><path d="M2307.48,1186.84 L2291.19,1273.10 M2317.07,1186.84 L2332.40,1273.10" stroke="#fff" stroke-width="1.1"/><path d="M2355.27,1171.02 L2388.32,1171.02 L2397.90,1176.29 L2403.65,1182.99 L2406.05,1191.62 L2406.05,1228.98 L2409.88,1231.09 L2406.05,1232.81 L2406.05,1265.38 L2403.65,1276.88 L2397.90,1283.59 L2388.32,1288.86 L2355.27,1288.86 L2359.10,1284.54 L2359.10,1232.81 L2355.27,1231.09 L2359.10,1228.98 L2359.10,1174.37 Z M2372.99,1177.72 L2385.45,1177.72 L2390.24,1181.08 L2392.15,1188.74 L2392.15,1228.98 L2388.80,1231.09 L2392.15,1232.81 L2392.15,1271.13 L2390.24,1278.80 L2385.45,1282.15 L2372.99,1282.15 L2372.99,1232.81 L2376.35,1231.09 L2372.99,1228.98 Z" fill="#111" fill-rule="evenodd"/><path d="M2365.81,1185.87 L2365.81,1272.09" stroke="#fff" stroke-width="1.10"/><path d="M2399.34,1194.49 L2399.34,1264.43" stroke="#fff" stroke-width="1.10"/><path d="M2420.89,1171.02 L2475.02,1171.02 L2471.67,1174.37 L2471.67,1199.76 L2464.96,1198.32 L2460.17,1194.49 L2457.30,1186.83 L2457.30,1177.72 L2438.14,1177.72 L2438.14,1226.10 L2445.80,1226.10 L2447.72,1219.40 L2451.55,1216.05 L2456.34,1215.09 L2456.34,1246.22 L2451.55,1245.27 L2447.72,1241.91 L2445.80,1233.77 L2438.14,1233.77 L2438.14,1282.15 L2457.30,1282.15 L2457.30,1273.05 L2460.17,1264.43 L2464.96,1260.59 L2471.67,1259.64 L2471.67,1284.54 L2475.02,1288.86 L2420.89,1288.86 L2424.73,1284.54 L2424.73,1232.81 L2420.89,1231.09 L2424.73,1228.98 L2424.73,1174.37 Z" fill="#111"/><path d="M2430.95,1185.87 L2430.95,1272.09" stroke="#fff" stroke-width="1.10"/><path d="M2246.23,1029.10 L2278.33,1029.10 L2293.67,1037.25 L2299.42,1053.54 L2299.42,1089.00 L2303.73,1091.39 L2299.42,1093.79 L2299.42,1125.41 L2293.67,1144.58 L2278.33,1152.73 L2246.23,1152.73 L2250.06,1148.41 L2250.06,1093.79 L2246.23,1091.39 L2250.06,1089.00 L2250.06,1033.42 Z M2263.96,1035.81 L2278.33,1035.81 L2283.12,1040.12 L2285.04,1048.75 L2285.04,1089.00 L2281.69,1091.39 L2285.04,1093.79 L2285.04,1135.00 L2283.12,1143.62 L2278.33,1146.02 L2263.96,1146.02 L2263.96,1093.79 L2267.79,1091.39 L2263.96,1089.00 Z" fill="#111" fill-rule="evenodd"/><path d="M2257.25,1044.92 L2257.25,1135.96" stroke="#fff" stroke-width="1.10"/><path d="M2292.23,1053.54 L2292.23,1128.29" stroke="#fff" stroke-width="1.10"/><path d="M2293.67,1029.10 L2348.77,1029.10 L2345.41,1033.42 L2345.41,1060.25 L2338.71,1058.81 L2332.48,1053.54 L2331.04,1046.83 L2331.04,1037.25 L2310.92,1037.25 L2309.00,1042.04 L2305.17,1034.37 L2297.50,1030.54 Z M2309.00,1086.12 L2312.83,1083.73 L2316.67,1083.73 L2319.54,1074.62 L2324.33,1072.23 L2332.96,1072.23 L2332.96,1111.04 L2324.33,1111.04 L2319.54,1108.16 L2316.67,1100.02 L2312.83,1100.02 L2309.00,1097.62 Z M2293.67,1152.73 L2348.77,1152.73 L2345.41,1148.41 L2345.41,1122.54 L2338.71,1123.98 L2332.48,1129.25 L2331.04,1135.96 L2331.04,1146.02 L2310.92,1146.02 L2309.00,1140.75 L2305.17,1148.41 L2297.50,1151.77 Z" fill="#111"/><path d="M2355.00,1029.10 L2382.79,1029.10 L2378.00,1037.25 L2371.29,1047.79 L2374.16,1052.58 L2372.25,1061.21 L2378.00,1070.79 L2384.71,1079.42 L2384.71,1089.00 L2389.50,1099.54 L2397.16,1112.00 L2405.79,1116.79 L2408.66,1145.54 L2411.54,1144.58 L2411.54,1135.00 L2415.37,1126.37 L2422.08,1122.54 L2426.87,1122.54 L2426.87,1148.41 L2430.23,1152.73 L2355.00,1152.73 L2358.83,1148.41 L2358.83,1093.79 L2355.00,1091.39 L2358.83,1089.00 L2358.83,1033.42 Z" fill="#111"/><path d="M2393.33,1133.56 L2406.75,1132.12 M2401.00,1126.37 L2404.83,1135.00 M2403.87,1140.75 L2407.70,1144.58" stroke="#fff" stroke-width="1.2"/><text x="2328.5" y="1331" font-family="Liberation Sans" font-size="27" fill="#111" stroke="#111" stroke-width="0.9" text-anchor="middle" textLength="169" lengthAdjust="spacingAndGlyphs">EST. 2020</text></g></svg>
<div class="a" style="left:392px;top:682px;width:71px;height:40px;border-radius:20px;background:#e6e6e6"></div>
<div class="t b" id="file2" style="left:408.0px;top:690.3px;font-size:22.00px;color:#222;letter-spacing:0.333px;">File</div>
<div class="t" id="png2" style="left:476.6px;top:686.7px;font-size:26.00px;color:#222;letter-spacing:0.280px;">10.png</div>
<div class="t b" id="pqb" style="left:391.9px;top:730.8px;font-size:26.00px;color:#222;letter-spacing:0.228px;">Print quality: <span style="color:#3a8a26">Good / 1521 DPI</span></div>
<div class="info" style="left:771.5px;top:727.1px"></div>
<div class="t" id="wdb" style="left:393.0px;top:780.4px;font-size:26.00px;color:#222;letter-spacing:0.487px;"><b>Width:</b> 3.29 units</div>
<div class="t" id="htb" style="left:612.0px;top:780.4px;font-size:26.00px;color:#222;letter-spacing:0.647px;"><b>Height:</b> 3.29 units</div>
<div class="info" style="left:842.5px;top:776.1px"></div>
<svg class="a" style="left:1112px;top:678px" width="12" height="30" viewBox="0 0 12 30"><circle cx="6" cy="4" r="3.4" fill="#222"/><circle cx="6" cy="13.4" r="3.4" fill="#222"/><circle cx="6" cy="22.7" r="3.4" fill="#222"/></svg>

<!-- canvas area -->
<div class="a" style="left:1200px;top:389px;width:2256px;height:1469px;background:#f7f7f7"></div>
<div class="a" style="left:1198px;top:1074px;width:38px;height:100px;border:2px solid #e0e0e0;border-left:none;border-radius:0 9px 9px 0;background:#fff"></div>
<svg class="a" style="left:1206px;top:1114px" width="16" height="20" viewBox="0 0 16 20"><path d="M12 2 L4 10 L12 18" fill="none" stroke="#aaa" stroke-width="2.6"/></svg>
<div class="a" style="left:1248px;top:438px;width:186px;height:80px;border-radius:40px;background:#dff0fa"></div>
<div class="t b" id="tfront" style="left:1273.9px;top:460.9px;font-size:29.70px;color:#2f64ab;letter-spacing:-0.290px;">Front <span style="font-weight:normal">incl.</span></div>
<div class="t b" id="tback" style="left:1467.4px;top:460.9px;font-size:29.70px;color:#222;letter-spacing:-0.460px;">Back <span style="font-weight:normal">+$5.95</span></div>
<div class="t b" id="tin" style="left:1693.0px;top:460.9px;font-size:29.70px;color:#222;letter-spacing:0.436px;">Inside label</div>
<div class="t b" id="tlr" style="left:1919.0px;top:460.9px;font-size:29.70px;color:#222;letter-spacing:0.188px;">Long right sleeve</div>
<div class="t b" id="tll" style="left:2227.8px;top:460.9px;font-size:29.70px;color:#222;letter-spacing:0.347px;">Long left sleeve</div>
<div class="a" style="left:1248px;top:566px;width:2160px;height:96px;border-radius:20px;background:#fff"></div>
<svg class="a" style="left:1284px;top:594px" width="40" height="40" viewBox="0 0 40 40"><rect x="5.5" y="5.5" width="29" height="29" fill="none" stroke="#222" stroke-width="3.5"/><g fill="#fff" stroke="#222" stroke-width="3.5"><rect x="1.75" y="1.75" width="8" height="8"/><rect x="30.25" y="1.75" width="8" height="8"/><rect x="1.75" y="30.25" width="8" height="8"/><rect x="30.25" y="30.25" width="8" height="8"/></g></svg>
<div class="t b" id="bt1" style="left:1336.5px;top:599.8px;font-size:26.00px;color:#222;letter-spacing:0.025px;">Transform</div>
<svg class="a" style="left:1524px;top:594px" width="40" height="40" viewBox="0 0 40 40"><rect x="2" y="2" width="36" height="36" rx="4" fill="none" stroke="#222" stroke-width="3.5"/><path d="M20 7 L25 13 L15 13Z M20 33 L25 27 L15 27Z M7 20 L13 15 L13 25Z M33 20 L27 15 L27 25Z" fill="#222"/><path d="M20 12V28M12 20H28" stroke="#222" stroke-width="3"/></svg>
<div class="t b" id="bt2" style="left:1575.0px;top:599.8px;font-size:26.00px;color:#222;letter-spacing:0.286px;">Position</div>
<svg class="a" style="left:1736px;top:592px" width="44" height="44" viewBox="0 0 44 44"><path d="M9 0 L9 35 L44 35" fill="none" stroke="#222" stroke-width="3.5"/><path d="M0 9 L35 9 L35 44" fill="none" stroke="#222" stroke-width="3.5"/></svg>
<div class="t b" id="bt3" style="left:1790.0px;top:599.8px;font-size:26.00px;color:#222;letter-spacing:0.567px;">Crop</div>
<svg class="a" style="left:1914px;top:596px" width="36" height="36" viewBox="0 0 36 36"><defs><clipPath id="pc"><rect width="36" height="36" rx="3"/></clipPath></defs><g clip-path="url(#pc)" stroke="#222" stroke-width="4.2"><path d="M-4 12 L12 -4M-4 24 L24 -4M-4 36 L36 -4M8 40 L40 8M20 40 L40 20M32 40 L40 32"/></g></svg>
<div class="t b" id="bt4" style="left:1963.7px;top:599.8px;font-size:26.00px;color:#222;letter-spacing:0.717px;">Pattern</div>
<svg class="a" style="left:2114px;top:593px" width="44" height="44" viewBox="0 0 44 44"><path d="M23 17 L28 22 L8 42 Q6 44 4 42 L2 40 Q0 38 2 36 Z" fill="#222"/><path d="M21 22 L24 19" stroke="#fff" stroke-width="2"/><g stroke="#222" stroke-width="2.6"><path d="M10 2 L18 10M18 2 L10 10"/><path d="M35 1 L43 9M43 1 L35 9"/><path d="M35 28 L43 36M43 28 L35 36"/></g></svg>
<div class="t b" id="bt5" style="left:2168.0px;top:599.8px;font-size:26.00px;color:#222;letter-spacing:0.312px;">Remove background</div>
<div class="a" style="left:2463px;top:578px;width:2px;height:72px;background:#e3e3e3"></div>
<svg class="a" style="left:2505px;top:597px" width="36" height="36" viewBox="0 0 36 36"><path d="M19 32 L5 32 Q2 32 2 29 L2 5 Q2 2 5 2 L26 2 Q29 2 29 5 L29 19" fill="none" stroke="#222" stroke-width="3.5"/><path d="M7 27 L12 21 L16 24 L20 19 L20 27Z" fill="#222"/><path d="M28 21V36M20.5 28.5H35.5" stroke="#222" stroke-width="3.5"/></svg>
<div class="t b" id="bt6" style="left:2552.0px;top:599.8px;font-size:26.00px;color:#222;letter-spacing:0.300px;">Save design</div>
<div class="a" style="left:2709px;top:598px;width:12px;height:12px;border-radius:50%;background:#e0443a"></div>
<div class="a" style="left:1248px;top:710px;width:2160px;height:1200px;border-radius:20px;background:#fff"></div>
<svg class="a" style="left:1850px;top:740px" width="950" height="1118" viewBox="1850 740 950 1118">
<defs><linearGradient id="hg" x1="0" y1="0" x2="1" y2="0"><stop offset="0" stop-color="#4a2b7d"/><stop offset="0.45" stop-color="#4e2e80"/><stop offset="1" stop-color="#422472"/></linearGradient><linearGradient id="vg" x1="0" y1="0" x2="0" y2="1"><stop offset="0" stop-color="#2a1450" stop-opacity="0"/><stop offset="0.45" stop-color="#2a1450" stop-opacity="0.05"/><stop offset="1" stop-color="#2a1450" stop-opacity="0.2"/></linearGradient></defs>
<defs><clipPath id="hclip"><path d="M2319.0,753.0 C2334.2,754.2 2385.7,754.5 2410.0,760.0 C2434.3,765.5 2451.8,777.8 2465.0,786.0 C2478.2,794.2 2482.0,796.7 2489.0,809.0 C2496.0,821.3 2502.3,846.8 2507.0,860.0 C2511.7,873.2 2508.2,880.3 2517.0,888.0 C2525.8,895.7 2546.0,900.4 2560.0,906.0 C2574.0,911.6 2589.7,914.9 2601.0,921.6 C2612.3,928.3 2620.0,936.4 2627.8,946.0 C2635.6,955.6 2642.2,967.3 2648.0,979.0 C2653.8,990.7 2657.9,1001.7 2662.7,1016.0 C2667.5,1030.3 2673.4,1052.3 2677.0,1065.0 C2680.6,1077.7 2680.2,1072.0 2684.0,1092.0 C2687.8,1112.0 2693.4,1149.0 2699.6,1185.0 C2705.8,1221.0 2714.3,1263.8 2721.0,1308.0 C2727.7,1352.2 2734.0,1403.3 2739.6,1450.0 C2745.2,1496.7 2752.1,1546.3 2754.8,1588.0 C2757.5,1629.7 2756.1,1672.3 2756.0,1700.0 C2755.9,1727.7 2755.8,1741.2 2754.0,1754.0 C2752.2,1766.8 2748.7,1771.7 2745.0,1777.0 C2741.3,1782.3 2734.2,1784.5 2732.0,1786.0 L2726.5,1858 L2638,1858 L2609.6,1762 L2609.6,1818 Q2609,1838 2574,1839 L2095,1839 Q2059,1838 2059,1818 L2059,1754 L2053.6,1743 L2019.6,1777 L2016,1858 L1925,1858 L1922,1790 C1919.7,1787.5 1912.0,1783.5 1908.0,1775.0 C1904.0,1766.5 1899.7,1763.8 1898.0,1739.0 C1896.3,1714.2 1896.6,1663.7 1898.0,1626.0 C1899.4,1588.3 1903.5,1550.7 1906.5,1513.0 C1909.5,1475.3 1912.8,1434.2 1916.0,1400.0 C1919.2,1365.8 1921.7,1343.8 1926.0,1308.0 C1930.3,1272.2 1937.6,1209.7 1941.6,1185.0 C1945.6,1160.3 1947.5,1173.2 1950.0,1160.0 C1952.5,1146.8 1954.7,1120.8 1956.4,1106.0 C1958.2,1091.2 1958.8,1080.0 1960.5,1071.5 C1962.2,1063.0 1963.3,1064.6 1966.7,1055.0 C1970.1,1045.4 1975.9,1027.3 1981.0,1014.0 C1986.1,1000.7 1991.3,986.3 1997.5,975.0 C2003.7,963.7 2010.5,954.2 2018.0,946.0 C2025.5,937.8 2031.8,931.5 2042.7,925.7 C2053.7,919.9 2067.6,917.3 2083.7,911.0 C2099.8,904.7 2129.3,897.7 2139.0,888.0 C2148.7,878.3 2137.0,869.5 2142.0,853.0 C2147.0,836.5 2154.7,804.5 2169.0,789.0 C2183.3,773.5 2203.0,766.0 2228.0,760.0 C2253.0,754.0 2303.8,754.2 2319.0,753.0 Z"/></clipPath><filter id="soft" x="-20%" y="-20%" width="140%" height="140%"><feGaussianBlur stdDeviation="7"/></filter><filter id="soft2"><feGaussianBlur stdDeviation="1.2"/></filter></defs>
<path d="M2319.0,753.0 C2334.2,754.2 2385.7,754.5 2410.0,760.0 C2434.3,765.5 2451.8,777.8 2465.0,786.0 C2478.2,794.2 2482.0,796.7 2489.0,809.0 C2496.0,821.3 2502.3,846.8 2507.0,860.0 C2511.7,873.2 2508.2,880.3 2517.0,888.0 C2525.8,895.7 2546.0,900.4 2560.0,906.0 C2574.0,911.6 2589.7,914.9 2601.0,921.6 C2612.3,928.3 2620.0,936.4 2627.8,946.0 C2635.6,955.6 2642.2,967.3 2648.0,979.0 C2653.8,990.7 2657.9,1001.7 2662.7,1016.0 C2667.5,1030.3 2673.4,1052.3 2677.0,1065.0 C2680.6,1077.7 2680.2,1072.0 2684.0,1092.0 C2687.8,1112.0 2693.4,1149.0 2699.6,1185.0 C2705.8,1221.0 2714.3,1263.8 2721.0,1308.0 C2727.7,1352.2 2734.0,1403.3 2739.6,1450.0 C2745.2,1496.7 2752.1,1546.3 2754.8,1588.0 C2757.5,1629.7 2756.1,1672.3 2756.0,1700.0 C2755.9,1727.7 2755.8,1741.2 2754.0,1754.0 C2752.2,1766.8 2748.7,1771.7 2745.0,1777.0 C2741.3,1782.3 2734.2,1784.5 2732.0,1786.0 L2726.5,1858 L2638,1858 L2609.6,1762 L2609.6,1818 Q2609,1838 2574,1839 L2095,1839 Q2059,1838 2059,1818 L2059,1754 L2053.6,1743 L2019.6,1777 L2016,1858 L1925,1858 L1922,1790 C1919.7,1787.5 1912.0,1783.5 1908.0,1775.0 C1904.0,1766.5 1899.7,1763.8 1898.0,1739.0 C1896.3,1714.2 1896.6,1663.7 1898.0,1626.0 C1899.4,1588.3 1903.5,1550.7 1906.5,1513.0 C1909.5,1475.3 1912.8,1434.2 1916.0,1400.0 C1919.2,1365.8 1921.7,1343.8 1926.0,1308.0 C1930.3,1272.2 1937.6,1209.7 1941.6,1185.0 C1945.6,1160.3 1947.5,1173.2 1950.0,1160.0 C1952.5,1146.8 1954.7,1120.8 1956.4,1106.0 C1958.2,1091.2 1958.8,1080.0 1960.5,1071.5 C1962.2,1063.0 1963.3,1064.6 1966.7,1055.0 C1970.1,1045.4 1975.9,1027.3 1981.0,1014.0 C1986.1,1000.7 1991.3,986.3 1997.5,975.0 C2003.7,963.7 2010.5,954.2 2018.0,946.0 C2025.5,937.8 2031.8,931.5 2042.7,925.7 C2053.7,919.9 2067.6,917.3 2083.7,911.0 C2099.8,904.7 2129.3,897.7 2139.0,888.0 C2148.7,878.3 2137.0,869.5 2142.0,853.0 C2147.0,836.5 2154.7,804.5 2169.0,789.0 C2183.3,773.5 2203.0,766.0 2228.0,760.0 C2253.0,754.0 2303.8,754.2 2319.0,753.0 Z" fill="url(#hg)"/>
<g clip-path="url(#hclip)">
<rect x="1850" y="740" width="950" height="1118" fill="url(#vg)"/>
<path d="M2176.0,796.0 C2185.0,791.3 2206.2,773.8 2230.0,768.0 C2253.8,762.2 2289.8,761.2 2319.0,761.0 C2348.2,760.8 2382.2,761.8 2405.0,767.0 C2427.8,772.2 2445.2,784.0 2456.0,792.0 C2466.8,800.0 2467.7,811.2 2470.0,815.0 C2465.0,820.8 2451.5,839.3 2440.0,850.0 C2428.5,860.7 2407.5,874.2 2401.0,879.0 L2255,879 C2247.5,871.7 2223.2,848.8 2210.0,835.0 C2196.8,821.2 2181.7,802.5 2176.0,796.0 Z" fill="#47287b"/>
<path d="M2170.0,800.0 C2175.0,795.8 2186.7,781.7 2200.0,775.0 C2213.3,768.3 2228.5,763.2 2250.0,760.0 C2271.5,756.8 2302.3,755.7 2329.0,756.0 C2355.7,756.3 2389.5,758.0 2410.0,762.0 C2430.5,766.0 2441.0,772.7 2452.0,780.0 C2463.0,787.3 2472.0,801.7 2476.0,806.0 C2473.7,811.7 2469.7,829.3 2462.0,840.0 C2454.3,850.7 2439.5,863.3 2430.0,870.0 C2420.5,876.7 2409.2,878.3 2405.0,880.0 C2404.2,872.5 2412.7,844.3 2400.0,835.0 C2387.3,825.7 2354.0,825.5 2329.0,824.0 C2304.0,822.5 2270.7,823.7 2250.0,826.0 C2229.3,828.3 2212.5,836.0 2205.0,838.0 C2201.7,835.0 2190.8,826.3 2185.0,820.0 C2179.2,813.7 2172.5,803.3 2170.0,800.0 Z" fill="#3a1e66" filter="url(#soft2)"/>
<path d="M2326,826 L2327,880" stroke="#3c1f6a" stroke-width="2" opacity="0.6"/>
<path d="M2250,878 Q2329,872 2405,880" stroke="#3c1f6a" stroke-width="2" fill="none" opacity="0.6"/>
<path d="M2160.0,800.0 C2166.7,795.3 2185.0,779.0 2200.0,772.0 C2215.0,765.0 2228.5,761.0 2250.0,758.0 C2271.5,755.0 2302.3,753.8 2329.0,754.0 C2355.7,754.2 2388.2,754.7 2410.0,759.0 C2431.8,763.3 2446.7,771.5 2460.0,780.0 C2473.3,788.5 2485.0,805.0 2490.0,810.0" fill="none" stroke="#4d2c84" stroke-width="6" opacity="0.7"/>
<path d="M2130,890 Q2150,830 2172,800 Q2200,838 2240,880 Q2270,910 2302,948 Q2210,935 2130,890 Z" fill="#4d2c84" filter="url(#soft2)"/>
<path d="M2530,892 Q2505,840 2476,806 Q2440,860 2400,890 Q2360,915 2330,942 Q2420,935 2530,892 Z" fill="#43247a" filter="url(#soft2)"/>
<path d="M2530,892 Q2505,850 2490,822 Q2470,860 2440,885 Q2480,898 2530,892 Z" fill="#3a1e66" opacity="0.7"/>
<path d="M2250,920 Q2300,955 2344,947" stroke="#3c1f6a" stroke-width="2.5" fill="none" opacity="0.6"/>
<path d="M2622,950 Q2640,1100 2650,1300 Q2660,1500 2672,1760 L2800,1800 L2800,900 Z" fill="#38205f" opacity="0.45" filter="url(#soft)"/>
<path d="M2560,900 Q2600,960 2622,1000 L2800,1000 L2800,900 Z" fill="#3a1e66" opacity="0.25"/>
<path d="M2040,1130 Q2052,1400 2058,1745" stroke="#3a1e66" stroke-width="12" fill="none" opacity="0.4" filter="url(#soft)"/>
<path d="M1900,1600 Q1960,1700 2020,1777" stroke="#3a1e66" stroke-width="18" fill="none" opacity="0.25" filter="url(#soft)"/>
<path d="M1961,1070 Q1990,1090 2019,1117" fill="none" stroke="#3a1e66" stroke-width="3" opacity="0.7"/>
<path d="M2684,1087 Q2655,1105 2626,1129" fill="none" stroke="#3a1e66" stroke-width="3" opacity="0.7"/>
<path d="M2151,1479 L2496,1479" stroke="#3a1e66" stroke-width="3" fill="none" opacity="0.85"/>
<path d="M2154,1484 Q2100,1580 2072,1664 Q2070,1720 2076,1762" stroke="#3a1e66" stroke-width="3" fill="none" opacity="0.85"/>
<path d="M2492,1484 Q2540,1580 2566,1671 Q2555,1730 2544,1777" stroke="#3a1e66" stroke-width="3" fill="none" opacity="0.85"/>
<path d="M2076,1764 Q2150,1770 2200,1768 Q2280,1765 2360,1775 Q2450,1778 2544,1777" stroke="#3a1e66" stroke-width="3" fill="none" opacity="0.85"/>
<path d="M2059,1800 Q2300,1815 2610,1805 L2610,1850 L2059,1850 Z" fill="#3a1e66" opacity="0.18"/>
</g>
<rect x="2314.5" y="886" width="27.5" height="44" fill="#8c8c8c"/><rect x="2314.5" y="886" width="27.5" height="16" fill="#e8e8e8"/><text x="2328" y="898" font-size="6" text-anchor="middle" fill="#333" font-family="Liberation Sans">GILDAN</text>
<path d="M2312,912 Q2326,912 2332,935 L2312,945 Z" fill="#47287b"/>
<circle cx="2327.5" cy="1183.3" r="195.5" fill="#f6f6f6" stroke="#0e0e0e" stroke-width="15"/>
<path d="M2186.71,1171.02 L2207.80,1171.02 L2226.97,1253.93 L2247.09,1171.02 L2268.18,1171.02 L2265.31,1174.38 L2265.31,1229.01 L2268.66,1231.12 L2265.31,1232.85 L2265.31,1284.60 L2268.18,1288.92 L2247.09,1288.92 L2251.89,1284.60 L2251.89,1219.43 L2235.59,1288.92 L2217.38,1288.92 L2203.48,1219.43 L2203.48,1284.60 L2207.80,1288.92 L2186.71,1288.92 L2190.06,1284.60 L2190.06,1232.85 L2186.71,1231.12 L2190.06,1229.01 L2190.06,1174.38 Z" fill="#111"/>
<path d="M2196.77,1186.84 L2196.77,1272.14" stroke="#f6f6f6" stroke-width="1.10"/>
<path d="M2258.12,1186.84 L2258.12,1272.14" stroke="#f6f6f6" stroke-width="1.10"/>
<path d="M2205.88,1194.51 L2223.13,1270.23 M2249.01,1194.51 L2233.68,1270.23" stroke="#f6f6f6" stroke-width="0.8"/>
<path d="M2299.33,1171.02 L2324.73,1171.02 L2322.82,1174.38 L2331.44,1229.01 L2334.80,1231.12 L2331.92,1232.85 L2341.99,1284.60 L2344.86,1288.92 L2324.73,1288.92 L2326.17,1284.60 L2321.86,1252.49 L2301.73,1252.49 L2297.42,1284.60 L2299.81,1288.92 L2279.20,1288.92 L2283.04,1284.60 L2292.62,1232.85 L2289.27,1231.12 L2292.91,1229.01 L2299.81,1174.38 Z M2307.48,1230.45 L2312.27,1198.34 L2318.02,1230.45 Z M2305.08,1246.26 L2305.08,1237.64 L2307.96,1233.33 L2315.63,1233.33 L2318.50,1237.64 L2318.50,1246.26 Z" fill="#111" fill-rule="evenodd"/>
<path d="M2307.48,1186.84 L2291.19,1273.10 M2317.07,1186.84 L2332.40,1273.10" stroke="#f6f6f6" stroke-width="1.1"/>
<path d="M2355.27,1171.02 L2388.32,1171.02 L2397.90,1176.29 L2403.65,1182.99 L2406.05,1191.62 L2406.05,1228.98 L2409.88,1231.09 L2406.05,1232.81 L2406.05,1265.38 L2403.65,1276.88 L2397.90,1283.59 L2388.32,1288.86 L2355.27,1288.86 L2359.10,1284.54 L2359.10,1232.81 L2355.27,1231.09 L2359.10,1228.98 L2359.10,1174.37 Z M2372.99,1177.72 L2385.45,1177.72 L2390.24,1181.08 L2392.15,1188.74 L2392.15,1228.98 L2388.80,1231.09 L2392.15,1232.81 L2392.15,1271.13 L2390.24,1278.80 L2385.45,1282.15 L2372.99,1282.15 L2372.99,1232.81 L2376.35,1231.09 L2372.99,1228.98 Z" fill="#111" fill-rule="evenodd"/>
<path d="M2365.81,1185.87 L2365.81,1272.09" stroke="#f6f6f6" stroke-width="1.10"/>
<path d="M2399.34,1194.49 L2399.34,1264.43" stroke="#f6f6f6" stroke-width="1.10"/>
<path d="M2420.89,1171.02 L2475.02,1171.02 L2471.67,1174.37 L2471.67,1199.76 L2464.96,1198.32 L2460.17,1194.49 L2457.30,1186.83 L2457.30,1177.72 L2438.14,1177.72 L2438.14,1226.10 L2445.80,1226.10 L2447.72,1219.40 L2451.55,1216.05 L2456.34,1215.09 L2456.34,1246.22 L2451.55,1245.27 L2447.72,1241.91 L2445.80,1233.77 L2438.14,1233.77 L2438.14,1282.15 L2457.30,1282.15 L2457.30,1273.05 L2460.17,1264.43 L2464.96,1260.59 L2471.67,1259.64 L2471.67,1284.54 L2475.02,1288.86 L2420.89,1288.86 L2424.73,1284.54 L2424.73,1232.81 L2420.89,1231.09 L2424.73,1228.98 L2424.73,1174.37 Z" fill="#111"/>
<path d="M2430.95,1185.87 L2430.95,1272.09" stroke="#f6f6f6" stroke-width="1.10"/>
<path d="M2246.23,1029.10 L2278.33,1029.10 L2293.67,1037.25 L2299.42,1053.54 L2299.42,1089.00 L2303.73,1091.39 L2299.42,1093.79 L2299.42,1125.41 L2293.67,1144.58 L2278.33,1152.73 L2246.23,1152.73 L2250.06,1148.41 L2250.06,1093.79 L2246.23,1091.39 L2250.06,1089.00 L2250.06,1033.42 Z M2263.96,1035.81 L2278.33,1035.81 L2283.12,1040.12 L2285.04,1048.75 L2285.04,1089.00 L2281.69,1091.39 L2285.04,1093.79 L2285.04,1135.00 L2283.12,1143.62 L2278.33,1146.02 L2263.96,1146.02 L2263.96,1093.79 L2267.79,1091.39 L2263.96,1089.00 Z" fill="#111" fill-rule="evenodd"/>
<path d="M2257.25,1044.92 L2257.25,1135.96" stroke="#f6f6f6" stroke-width="1.10"/>
<path d="M2292.23,1053.54 L2292.23,1128.29" stroke="#f6f6f6" stroke-width="1.10"/>
<path d="M2293.67,1029.10 L2348.77,1029.10 L2345.41,1033.42 L2345.41,1060.25 L2338.71,1058.81 L2332.48,1053.54 L2331.04,1046.83 L2331.04,1037.25 L2310.92,1037.25 L2309.00,1042.04 L2305.17,1034.37 L2297.50,1030.54 Z M2309.00,1086.12 L2312.83,1083.73 L2316.67,1083.73 L2319.54,1074.62 L2324.33,1072.23 L2332.96,1072.23 L2332.96,1111.04 L2324.33,1111.04 L2319.54,1108.16 L2316.67,1100.02 L2312.83,1100.02 L2309.00,1097.62 Z M2293.67,1152.73 L2348.77,1152.73 L2345.41,1148.41 L2345.41,1122.54 L2338.71,1123.98 L2332.48,1129.25 L2331.04,1135.96 L2331.04,1146.02 L2310.92,1146.02 L2309.00,1140.75 L2305.17,1148.41 L2297.50,1151.77 Z" fill="#111"/>
<path d="M2355.00,1029.10 L2382.79,1029.10 L2378.00,1037.25 L2371.29,1047.79 L2374.16,1052.58 L2372.25,1061.21 L2378.00,1070.79 L2384.71,1079.42 L2384.71,1089.00 L2389.50,1099.54 L2397.16,1112.00 L2405.79,1116.79 L2408.66,1145.54 L2411.54,1144.58 L2411.54,1135.00 L2415.37,1126.37 L2422.08,1122.54 L2426.87,1122.54 L2426.87,1148.41 L2430.23,1152.73 L2355.00,1152.73 L2358.83,1148.41 L2358.83,1093.79 L2355.00,1091.39 L2358.83,1089.00 L2358.83,1033.42 Z" fill="#111"/>
<path d="M2393.33,1133.56 L2406.75,1132.12 M2401.00,1126.37 L2404.83,1135.00 M2403.87,1140.75 L2407.70,1144.58" stroke="#f6f6f6" stroke-width="1.2"/>
<text x="2328.5" y="1331" font-family="Liberation Sans" font-size="27" fill="#111" stroke="#111" stroke-width="0.9" text-anchor="middle" textLength="169" lengthAdjust="spacingAndGlyphs">EST. 2020</text>
</svg>
<div class="a" style="left:3288px;top:734px;width:96px;height:192px;border:2px solid #e0e0e0;border-radius:14px;background:#fff"></div>
<svg class="a" style="left:3318px;top:764px" width="36" height="36" viewBox="0 0 36 36"><g fill="none" stroke="#222" stroke-width="4"><rect x="2" y="2" width="12" height="18"/><rect x="22" y="2" width="12" height="10"/><rect x="2" y="26" width="12" height="8"/><rect x="22" y="18" width="12" height="16"/></g></svg>
<svg class="a" style="left:3318px;top:852px" width="36" height="36" viewBox="0 0 36 36"><g fill="#222"><rect x="0" y="0" width="5" height="5"/><rect x="7" y="0" width="5" height="5"/><rect x="15" y="0" width="5" height="5"/><rect x="23" y="0" width="5" height="5"/><rect x="31" y="0" width="5" height="5"/><rect x="0" y="7" width="5" height="5"/><rect x="15" y="7" width="5" height="5"/><rect x="31" y="7" width="5" height="5"/><rect x="0" y="15" width="5" height="5"/><rect x="7" y="15" width="5" height="5"/><rect x="15" y="15" width="5" height="5"/><rect x="23" y="15" width="5" height="5"/><rect x="31" y="15" width="5" height="5"/><rect x="0" y="23" width="5" height="5"/><rect x="15" y="23" width="5" height="5"/><rect x="31" y="23" width="5" height="5"/><rect x="0" y="31" width="5" height="5"/><rect x="7" y="31" width="5" height="5"/><rect x="15" y="31" width="5" height="5"/><rect x="23" y="31" width="5" height="5"/><rect x="31" y="31" width="5" height="5"/></g></svg>

<!-- bottom bar -->
<div class="a" style="left:0;top:1857px;width:3456px;height:147px;background:#fff;border-top:2px solid #e3e3e3"></div>
<div class="a" style="left:2751px;top:1892px;width:340px;height:80px;border-radius:12px;background:#f7f7f7"></div>
<div class="t b" id="price" style="left:2800.7px;top:1914.6px;font-size:30.50px;color:#222;letter-spacing:0.330px;">From $29.61</div>
<div class="info" style="left:2993px;top:1915px"></div>
<div class="a" style="left:3077px;top:1892px;width:291px;height:80px;border-radius:12px;background:#d12f22"></div>
<div class="t b" id="save" style="left:3126.0px;top:1919.2px;font-size:29.60px;color:#fff;letter-spacing:0.364px;">Save product</div>

</div>
</body></html>
